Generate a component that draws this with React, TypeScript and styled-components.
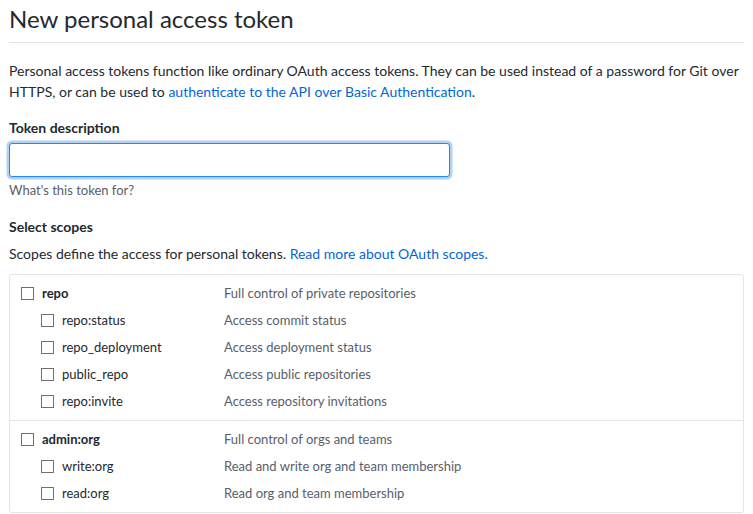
import React from "react";
import styled, { createGlobalStyle } from "styled-components";

const Global = createGlobalStyle`
  html, body { margin: 0; padding: 0; background: #fff; overflow: hidden; }
  body {
    font-family: Lato, "Liberation Sans", sans-serif;
    font-size: 14px;
    line-height: 1.5;
    color: #24292e;
  }
  * { box-sizing: border-box; }
`;

const Page = styled.div`
  padding: 4px 9px 0 9px;
  width: 753px;
`;

const Subhead = styled.div`
  padding-bottom: 8px;
  margin-bottom: 17px;
  border-bottom: 1px solid #e1e4e8;
`;

const Title = styled.h1`
  margin: 0;
  font-size: 24px;
  line-height: 30px;
  font-weight: 400;
`;

const Text = styled.p<{ $mb?: number }>`
  margin: 0 0 ${(p) => p.$mb ?? 0}px;
  line-height: 21px;
`;

const Link = styled.a`
  color: #0366d6;
  text-decoration: none;
`;

const FormGroup = styled.div<{ $mb?: number }>`
  margin-bottom: ${(p) => p.$mb ?? 0}px;
`;

const Label = styled.label<{ $mb?: number }>`
  display: block;
  font-weight: 700;
  line-height: 21px;
  margin-bottom: ${(p) => p.$mb ?? 0}px;
`;

const Input = styled.input`
  display: block;
  width: 441px;
  height: 34px;
  padding: 6px 8px;
  font: inherit;
  border: 1px solid #2188ff;
  border-radius: 3px;
  outline: none;
  box-shadow: 0 0 0 2.5px rgba(3, 102, 214, 0.3);
`;

const Note = styled.p`
  margin: 4px 0 0;
  font-size: 13px;
  line-height: 19px;
  color: #586069;
`;

const ScopeBox = styled.div`
  border: 1px solid #e1e4e8;
  border-radius: 3px;
  width: 735px;
`;

const ScopeGroup = styled.div`
  padding: 5px 0 5px;
  & + & {
    border-top: 1px solid #e1e4e8;
  }
`;

const ScopeRow = styled.div`
  display: grid;
  grid-template-columns: 203px 1fr;
  align-items: center;
  height: 27px;
  padding-left: 11px;
  font-size: 13px;
`;

const ScopeName = styled.span<{ $child?: boolean }>`
  display: flex;
  align-items: center;
  gap: 8px;
  padding-left: ${(p) => (p.$child ? 20 : 0)}px;
  font-weight: ${(p) => (p.$child ? 400 : 700)};
  color: #24292e;
`;

const Check = styled.input`
  appearance: none;
  -webkit-appearance: none;
  margin: 0;
  width: 13px;
  height: 13px;
  border: 1px solid #707070;
  border-radius: 0;
  background: #fff;
  flex: none;
`;

const ScopeDesc = styled.span`
  color: #586069;
`;

type Scope = { name: string; desc: string; children: { name: string; desc: string }[] };

const scopes: Scope[] = [
  {
    name: "repo",
    desc: "Full control of private repositories",
    children: [
      { name: "repo:status", desc: "Access commit status" },
      { name: "repo_deployment", desc: "Access deployment status" },
      { name: "public_repo", desc: "Access public repositories" },
      { name: "repo:invite", desc: "Access repository invitations" },
    ],
  },
  {
    name: "admin:org",
    desc: "Full control of orgs and teams",
    children: [
      { name: "write:org", desc: "Read and write org and team membership" },
      { name: "read:org", desc: "Read org and team membership" },
    ],
  },
];

export default function App() {
  return (
    <>
      <Global />
      <Page>
        <Subhead>
          <Title>New personal access token</Title>
        </Subhead>
        <Text $mb={15}>
          Personal access tokens function like ordinary OAuth access tokens. They can be used
          instead of a password for Git over HTTPS, or can be used to{" "}
          <Link href="#">authenticate to the API over Basic Authentication</Link>.
        </Text>
        <FormGroup $mb={16}>
          <Label $mb={5}>Token description</Label>
          <Input type="text" />
          <Note>What's this token for?</Note>
        </FormGroup>
        <FormGroup>
          <Label $mb={6}>Select scopes</Label>
          <Text $mb={10}>
            Scopes define the access for personal tokens.{" "}
            <Link href="#">Read more about OAuth scopes.</Link>
          </Text>
          <ScopeBox>
            {scopes.map((s) => (
              <ScopeGroup key={s.name}>
                <ScopeRow>
                  <ScopeName>
                    <Check type="checkbox" />
                    {s.name}
                  </ScopeName>
                  <ScopeDesc>{s.desc}</ScopeDesc>
                </ScopeRow>
                {s.children.map((c) => (
                  <ScopeRow key={c.name}>
                    <ScopeName $child>
                      <Check type="checkbox" />
                      {c.name}
                    </ScopeName>
                    <ScopeDesc>{c.desc}</ScopeDesc>
                  </ScopeRow>
                ))}
              </ScopeGroup>
            ))}
          </ScopeBox>
        </FormGroup>
      </Page>
    </>
  );
}
